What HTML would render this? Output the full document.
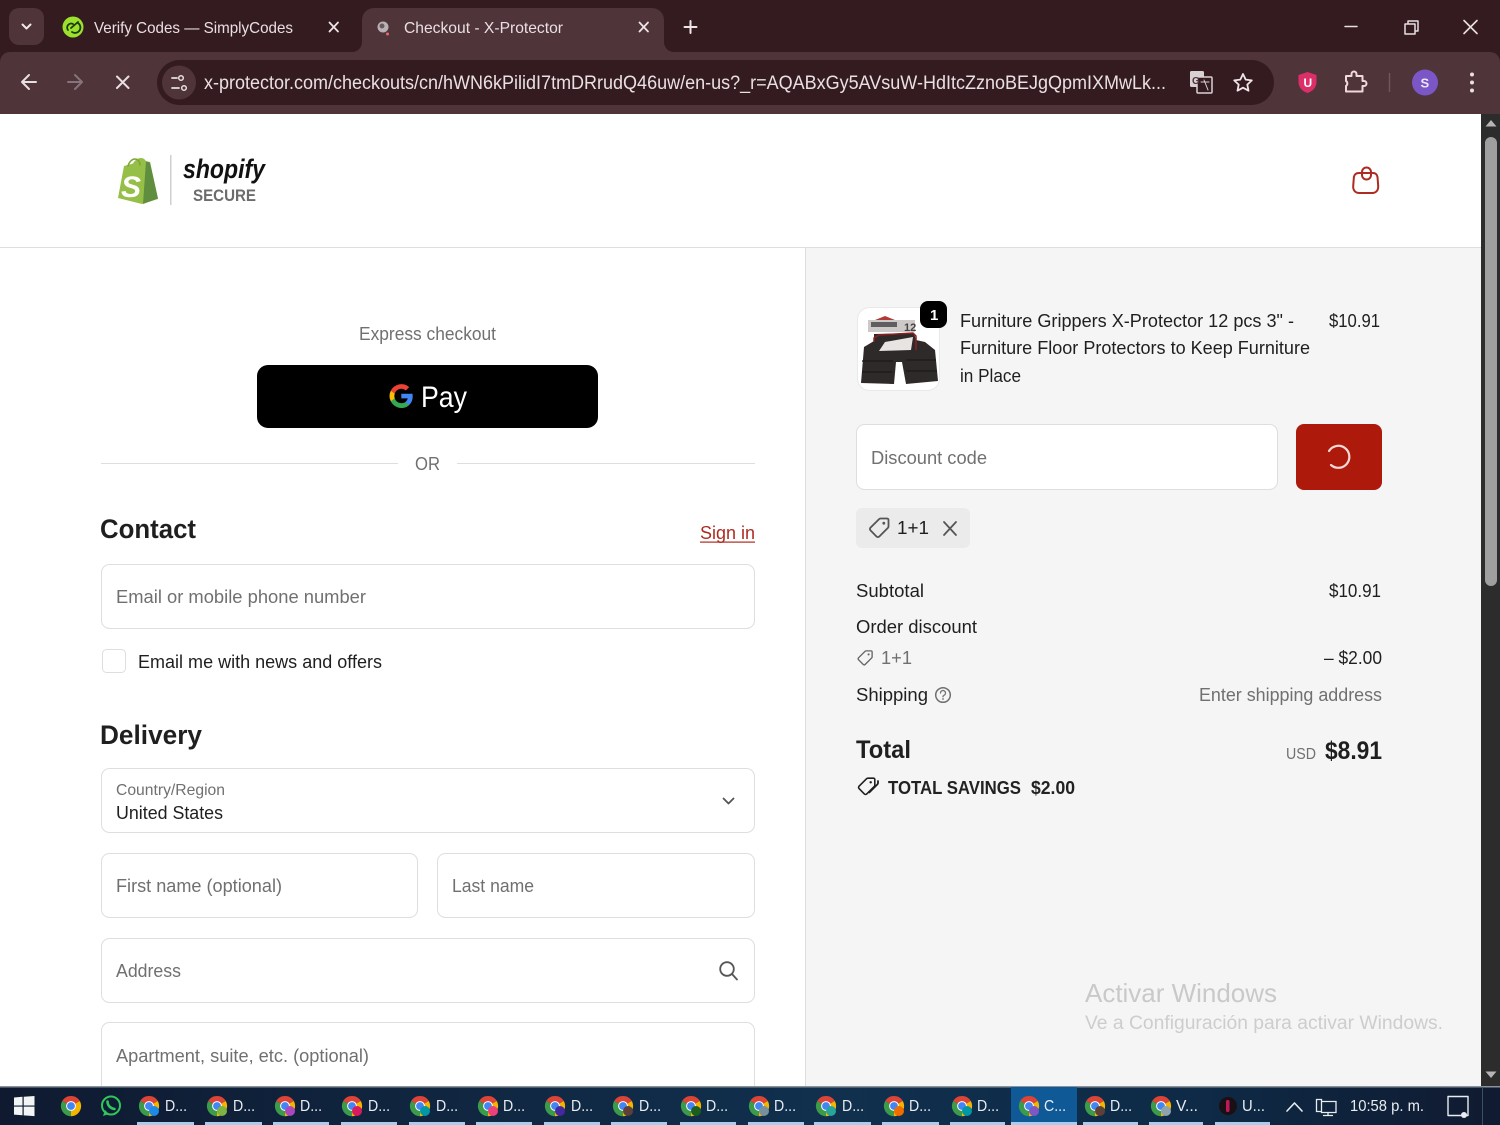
<!DOCTYPE html>
<html lang="en"><head><meta charset="utf-8"><title>Checkout - X-Protector</title>
<style>
html,body{margin:0;padding:0;width:1500px;height:1125px;overflow:hidden;background:#fff}
svg{display:block;font-size:18.5px;filter:blur(.3px)}
text{font-family:"Liberation Sans",sans-serif;fill:#1f1f1f}
.g{fill:#707070}
.c{fill:#e9e0e3}
.tb{fill:#e8edf2;font-size:16px}
.ln{fill:none;stroke-linecap:round;stroke-linejoin:round}
</style></head><body>
<svg width="1500" height="1125" viewBox="0 0 1500 1125" xmlns="http://www.w3.org/2000/svg">
<defs>
<linearGradient id="tbg" x1="0" x2="1" y1="0" y2="0"><stop offset="0" stop-color="#0f1a30"/><stop offset=".55" stop-color="#10304e"/><stop offset=".8" stop-color="#0e2a46"/><stop offset="1" stop-color="#101a30"/></linearGradient>
<symbol id="ch" viewBox="-11 -11 22 22" width="22" height="22" overflow="visible">
<path d="M0 0L-8.8-5A10.2 10.2 0 0 1 8.8-5Z" fill="#db4437"/>
<path d="M0 0L8.8-5A10.2 10.2 0 0 1 0 10.2Z" fill="#f4b400"/>
<path d="M0 0L0 10.2A10.2 10.2 0 0 1-8.8-5Z" fill="#3c9b4a"/>
<circle r="4.9" fill="#fff"/><circle r="3.9" fill="#4285f4"/>
</symbol>
<symbol id="tag" viewBox="0 0 24 24" width="24" height="24">
<path class="ln" d="M13.5 2.5H20a1.5 1.5 0 0 1 1.5 1.5v6.5a2 2 0 0 1-.6 1.4l-8.6 8.6a2 2 0 0 1-2.8 0L3.5 14.4a2 2 0 0 1 0-2.8l8.6-8.5a2 2 0 0 1 1.4-.6z" stroke="currentColor" stroke-width="1.8"/>
<circle cx="16.8" cy="7.2" r="1.4" fill="currentColor"/>
</symbol>
</defs>

<!-- browser chrome -->
<rect width="1500" height="114" fill="#341b20"/>
<rect x="9" y="8" width="35" height="37" rx="10" fill="#4f343a"/>
<path class="ln" d="M22.5 24.5l4 4 4-4" stroke="#f0e8ea" stroke-width="2"/>
<circle cx="73" cy="27" r="10.5" fill="#9be22d"/>
<path class="ln" d="M68 30a4 4 0 0 1 5-6M72 32a5 5 0 0 0 6-9M71 28l7-6" stroke="#1e3a10" stroke-width="1.8"/>
<text class="c" x="94" y="33" font-size="16" textLength="199" lengthAdjust="spacingAndGlyphs">Verify Codes — SimplyCodes</text>
<path class="ln" d="M329.5 22.5l8.5 9M338 22.5L329.5 31.5" stroke="#eee5e8" stroke-width="1.8"/>
<path d="M352 52a10 10 0 0 0 10-10V20a12 12 0 0 1 12-12h278a12 12 0 0 1 12 12v22a10 10 0 0 0 10 10z" fill="#4f343a"/>
<circle cx="383" cy="27" r="5.5" fill="#b9b2b5"/><circle cx="382" cy="26" r="2.5" fill="#6a5a60"/><circle cx="387.5" cy="34" r="1.5" fill="#e36a6a"/>
<text class="c" x="404" y="33" font-size="16" textLength="159" lengthAdjust="spacingAndGlyphs">Checkout - X-Protector</text>
<path class="ln" d="M639.5 22.5l8.5 9M648 22.5L639.5 31.5" stroke="#eee5e8" stroke-width="1.8"/>
<path class="ln" d="M690.5 21v12M684.5 27h12" stroke="#eee5e8" stroke-width="2"/>
<path class="ln" d="M1345 26.5h12" stroke="#e8dfe2" stroke-width="1.5"/>
<path class="ln" d="M1405 24h10v10h-10zM1408 24v-3h10v10h-3" stroke="#e8dfe2" stroke-width="1.5"/>
<path class="ln" d="M1464 20.5l13 13M1477 20.5l-13 13" stroke="#e8dfe2" stroke-width="1.6"/>

<path d="M0 114V62a10 10 0 0 1 10-10h1480a10 10 0 0 1 10 10v52z" fill="#4f343a"/>
<path class="ln" d="M36 82H23M29 75l-7 7 7 7" stroke="#e8dfe2" stroke-width="2"/>
<path class="ln" d="M68 82h13M75 75l7 7-7 7" stroke="#87737a" stroke-width="2"/>
<path class="ln" d="M117 76.5l11.5 11.5M128.5 76.5L117 88" stroke="#e8dfe2" stroke-width="2"/>
<rect x="157" y="60" width="1117" height="45" rx="22.5" fill="#341b20"/>
<circle cx="179" cy="82.5" r="17" fill="#4f343a"/>
<path class="ln" d="M172 78h5M172 88h7" stroke="#e8dfe2" stroke-width="1.8"/>
<circle cx="181" cy="78" r="2.3" fill="none" stroke="#e8dfe2" stroke-width="1.5"/><circle cx="184" cy="88" r="2.3" fill="none" stroke="#e8dfe2" stroke-width="1.5"/>
<text class="c" x="204" y="89" font-size="19" textLength="962" lengthAdjust="spacingAndGlyphs">x-protector.com/checkouts/cn/hWN6kPilidI7tmDRrudQ46uw/en-us?_r=AQABxGy5AVsuW-HdItcZznoBEJgQpmIXMwLk...</text>
<rect x="1190" y="71" width="14" height="16" rx="1.5" fill="#d9d2d4"/>
<rect x="1197" y="77" width="15" height="16" rx="1" fill="#341b20" stroke="#d9d2d4" stroke-width="1.5"/>
<text x="1192" y="84" font-size="10" font-weight="700" style="fill:#4f343a">G</text>
<path class="ln" d="M1201 82h8M1204 80l4 10" stroke="#d9d2d4" stroke-width="1"/>
<path class="ln" d="M1243 74l2.7 5.6 6.1.8-4.500 4.200 1.200 6.100-5.500-3-5.500 3 1.200-6.100-4.500-4.200 6.100-.8z" stroke="#efe6e9" stroke-width="1.8"/>
<path d="M1307.5 72l9 3v7c0 6-4.500 9.500-9 11-4.500-1.500-9-5-9-11v-7z" fill="#dc2e68"/>
<text x="1303.5" y="87" font-size="12" font-weight="700" style="fill:#fff">U</text>
<path class="ln" d="M1346 76h5.500v-2a2.500 2.500 0 0 1 5 0v2h6v5h1.500a2.500 2.500 0 0 1 0 5h-1.500v5.500h-16.500v-5.500a3 3 0 0 0 0-5z" stroke="#efd9dd" stroke-width="2"/>
<path d="M1389.5 73v19" stroke="#6f575d" stroke-width="1.5"/>
<circle cx="1425" cy="82.5" r="13" fill="#7b56c7"/>
<text x="1420.5" y="87.5" font-size="13" font-weight="700" style="fill:#ece6f6">S</text>
<circle cx="1472" cy="74.5" r="2" fill="#e8dfe2"/><circle cx="1472" cy="82.5" r="2" fill="#e8dfe2"/><circle cx="1472" cy="90.5" r="2" fill="#e8dfe2"/>

<!-- page -->
<rect y="114" width="1481" height="973" fill="#fff"/>
<rect x="806" y="248" width="675" height="839" fill="#f5f5f5"/>
<rect y="247" width="1481" height="1" fill="#dedede"/>
<rect x="805" y="248" width="1" height="839" fill="#dedede"/>

<!-- scrollbar -->
<rect x="1481" y="114" width="19" height="973" fill="#2c2c2c"/>
<rect x="1485" y="137" width="12" height="449" rx="6" fill="#9f9f9f"/>
<path d="M1491 120l5.5 6.5h-11z" fill="#b5b5b5"/>
<path d="M1491 1078l5.5-6.5h-11z" fill="#b5b5b5"/>

<!-- shopify logo -->
<path d="M118 198l6-32 9-2.500c2-3.500 5-5.500 8-5.500s4 2 5 3l4 1 8 37-16 5z" fill="#95bf47"/>
<path d="M146 161.500l4 1 8 36-15 5.500z" fill="#5e8e3e"/>
<path class="ln" d="M128 166c1-4 4-7 7-7s5 3 5 6" stroke="#7da638" stroke-width="1.5"/>
<text x="121" y="197" font-size="30" font-weight="700" font-style="italic" style="fill:#fff">S</text>
<rect x="170" y="155" width="1.5" height="50" fill="#cfcfcf"/>
<text x="183" y="178" font-size="27" font-weight="700" font-style="italic" textLength="82" lengthAdjust="spacingAndGlyphs" style="fill:#111">shopify</text>
<text x="193" y="201" font-size="16.5" font-weight="700" textLength="63" lengthAdjust="spacingAndGlyphs" style="fill:#6c6c6c">SECURE</text>

<!-- cart icon -->
<path class="ln" d="M1359 173h14c2.500 0 4 1.500 4.500 4l.7 9c.3 4-2 7-6 7h-13c-4 0-6.300-3-6-7l.7-9c.5-2.500 2-4 5.100-4z" stroke="#ad2b20" stroke-width="2"/>
<path class="ln" d="M1362 175v-3a4.500 4.500 0 0 1 9 0v3a4.500 4.500 0 0 1-9 0z" stroke="#ad2b20" stroke-width="2"/>

<!-- left column -->
<text class="g" x="359" y="340" textLength="137" lengthAdjust="spacingAndGlyphs">Express checkout</text>
<rect x="257" y="365" width="341" height="63" rx="11" fill="#000"/>
<path d="M412.7 396.200c0-.9-.1-1.700-.2-2.500h-11.200v4.700h6.400a5.500 5.500 0 0 1-2.400 3.600v3h3.800c2.300-2.100 3.600-5.100 3.600-8.800z" fill="#4285f4"/>
<path d="M401.3 408c3.200 0 5.900-1.100 7.800-2.900l-3.800-3c-1 .7-2.400 1.100-4 1.100-3.100 0-5.700-2.100-6.600-4.900h-3.900v3a11.800 11.800 0 0 0 10.500 6.700z" fill="#34a853"/>
<path d="M394.7 398.300a7 7 0 0 1 0-4.600v-3h-3.900a11.800 11.800 0 0 0 0 10.600z" fill="#fbbc04"/>
<path d="M401.3 388.700c1.700 0 3.300.6 4.500 1.800l3.400-3.400a11.800 11.800 0 0 0-18.400 3.600l3.900 3c.9-2.900 3.500-5 6.600-5z" fill="#ea4335"/>
<text x="421" y="407" font-size="30" textLength="46" lengthAdjust="spacingAndGlyphs" style="fill:#fff">Pay</text>
<rect x="101" y="463" width="297" height="1" fill="#dedede"/>
<rect x="457" y="463" width="298" height="1" fill="#dedede"/>
<text class="g" x="415" y="470" textLength="25" lengthAdjust="spacingAndGlyphs">OR</text>

<text x="100" y="538" font-size="27" font-weight="700" textLength="96" lengthAdjust="spacingAndGlyphs">Contact</text>
<text x="700" y="539" textLength="55" lengthAdjust="spacingAndGlyphs" style="fill:#ad2b20">Sign in</text>
<rect x="700" y="541.5" width="55" height="1.2" fill="#ad2b20"/>
<rect x="101.5" y="564.5" width="653" height="64" rx="8" fill="#fff" stroke="#dedede"/>
<text class="g" x="116" y="603" textLength="250" lengthAdjust="spacingAndGlyphs">Email or mobile phone number</text>
<rect x="102.5" y="649.5" width="23" height="23" rx="4" fill="#fff" stroke="#dedede"/>
<text x="138" y="668" textLength="244" lengthAdjust="spacingAndGlyphs">Email me with news and offers</text>

<text x="100" y="744" font-size="27" font-weight="700" textLength="102" lengthAdjust="spacingAndGlyphs">Delivery</text>
<rect x="101.5" y="768.5" width="653" height="64" rx="8" fill="#fff" stroke="#dedede"/>
<text class="g" x="116" y="795" font-size="16" textLength="109" lengthAdjust="spacingAndGlyphs">Country/Region</text>
<text x="116" y="819" textLength="107" lengthAdjust="spacingAndGlyphs">United States</text>
<path class="ln" d="M723.5 798.5l5 5 5-5" stroke="#555" stroke-width="1.8"/>
<rect x="101.5" y="853.5" width="316" height="64" rx="8" fill="#fff" stroke="#dedede"/>
<text class="g" x="116" y="892" textLength="166" lengthAdjust="spacingAndGlyphs">First name (optional)</text>
<rect x="437.5" y="853.5" width="317" height="64" rx="8" fill="#fff" stroke="#dedede"/>
<text class="g" x="452" y="892" textLength="82" lengthAdjust="spacingAndGlyphs">Last name</text>
<rect x="101.5" y="938.5" width="653" height="64" rx="8" fill="#fff" stroke="#dedede"/>
<text class="g" x="116" y="977" textLength="65" lengthAdjust="spacingAndGlyphs">Address</text>
<circle cx="727" cy="969" r="6.8" fill="none" stroke="#555" stroke-width="1.8"/>
<path class="ln" d="M732 974l5 5.5" stroke="#555" stroke-width="1.8"/>
<rect x="101.5" y="1022.5" width="653" height="80" rx="8" fill="#fff" stroke="#dedede"/>
<text class="g" x="116" y="1062" textLength="253" lengthAdjust="spacingAndGlyphs">Apartment, suite, etc. (optional)</text>

<!-- right column -->
<rect x="857.5" y="307.5" width="82" height="83" rx="12" fill="#fff" stroke="#e9e9e9"/>
<rect x="868" y="320" width="47" height="12" fill="#cdc9c9"/>
<path d="M875 320l10-4 10 4z" fill="#b23a36"/>
<rect x="871" y="322" width="26" height="5" fill="#5f5f5f"/>
<text x="904" y="331" font-size="11" font-weight="700" style="fill:#444">12</text>
<path d="M861 383L864 347L874 341L874 334L914 333L916 340L925 342L935 350L938 381L906 384L902 362L896 362L894 384Z" fill="#2f2a2a"/>
<path d="M874 342v-4l5-3 34-2 3 3v14" fill="none" stroke="#8f2020" stroke-width="1.5"/>
<path d="M879 351l6-9 28-5-2 13z" fill="#e8e4e2"/>
<path d="M862 361h31M862 372h30M906 360h30M906 371h31" stroke="#1b1919" stroke-width="1.2"/>
<rect x="920" y="301" width="27" height="27" rx="8" fill="#000"/>
<text x="930" y="320" font-size="15" font-weight="700" style="fill:#fff">1</text>

<text x="960" y="327" textLength="334" lengthAdjust="spacingAndGlyphs">Furniture Grippers X-Protector 12 pcs 3" -</text>
<text x="960" y="354" textLength="350" lengthAdjust="spacingAndGlyphs">Furniture Floor Protectors to Keep Furniture</text>
<text x="960" y="382" textLength="61" lengthAdjust="spacingAndGlyphs">in Place</text>
<text x="1329" y="327" textLength="51" lengthAdjust="spacingAndGlyphs">$10.91</text>

<rect x="856.5" y="424.5" width="421" height="65" rx="8" fill="#fff" stroke="#dedede"/>
<text class="g" x="871" y="464" textLength="116" lengthAdjust="spacingAndGlyphs">Discount code</text>
<rect x="1296" y="424" width="86" height="66" rx="8" fill="#ad1a0c"/>
<path class="ln" d="M1329 451a11 11 0 1 1 2 14" stroke="#f6d9d5" stroke-width="2.2"/>

<rect x="856" y="508" width="114" height="40" rx="6" fill="#ebebeb"/>
<use href="#tag" x="867" y="516" width="24" height="24" style="color:#555"/>
<text x="897" y="534" textLength="32" lengthAdjust="spacingAndGlyphs">1+1</text>
<path class="ln" d="M944 522l12 13M956 522l-12 13" stroke="#555" stroke-width="1.8"/>

<text x="856" y="597" textLength="68" lengthAdjust="spacingAndGlyphs">Subtotal</text>
<text x="1329" y="597" textLength="52" lengthAdjust="spacingAndGlyphs">$10.91</text>
<text x="856" y="633" textLength="121" lengthAdjust="spacingAndGlyphs">Order discount</text>
<use href="#tag" x="856" y="649" width="18" height="18" style="color:#666"/>
<text class="g" x="881" y="664" textLength="31" lengthAdjust="spacingAndGlyphs">1+1</text>
<text x="1324" y="664" textLength="58" lengthAdjust="spacingAndGlyphs">– $2.00</text>
<text x="856" y="701" textLength="72" lengthAdjust="spacingAndGlyphs">Shipping</text>
<circle cx="943" cy="695" r="7.3" fill="none" stroke="#707070" stroke-width="1.5"/>
<path class="ln" d="M940.5 693a2.500 2.500 0 1 1 3.500 2.300c-.7.4-1 .8-1 1.500" stroke="#707070" stroke-width="1.3"/>
<circle cx="943" cy="699" r=".9" fill="#707070"/>
<text class="g" x="1199" y="701" textLength="183" lengthAdjust="spacingAndGlyphs">Enter shipping address</text>

<text x="856" y="758" font-size="25" font-weight="700" textLength="55" lengthAdjust="spacingAndGlyphs">Total</text>
<text class="g" x="1286" y="759" font-size="16" textLength="30" lengthAdjust="spacingAndGlyphs">USD</text>
<text x="1325" y="759" font-size="25" font-weight="700" textLength="57" lengthAdjust="spacingAndGlyphs">$8.91</text>
<use href="#tag" x="856" y="776" width="21" height="21" style="color:#1f1f1f"/>
<path class="ln" d="M878 781v2a2 2 0 0 1-.6 1.400l-8 8" stroke="#1f1f1f" stroke-width="1.8"/>
<text x="888" y="794" font-weight="700" textLength="133" lengthAdjust="spacingAndGlyphs" style="fill:#222">TOTAL SAVINGS</text>
<text x="1031" y="794" font-weight="700" textLength="44" lengthAdjust="spacingAndGlyphs" style="fill:#222">$2.00</text>

<text x="1085" y="1002" font-size="26" textLength="192" lengthAdjust="spacingAndGlyphs" style="fill:#c9c9c9">Activar Windows</text>
<text x="1085" y="1029" font-size="19" textLength="358" lengthAdjust="spacingAndGlyphs" style="fill:#cdcdcd">Ve a Configuración para activar Windows.</text>

<!-- taskbar -->
<rect y="1086" width="1500" height="39" fill="url(#tbg)"/>
<rect y="1086" width="1500" height="1.5" fill="#8a929c"/>
<path d="M14 1097.500l8.500-.7v8.700H14zM23.700 1096.700l10.800-.7v9.500H23.700zM14 1106.600h8.500v8.700l-8.500-.7zM23.700 1106.600h10.800v9.500l-10.800-.7z" fill="#f2f4f6"/>
<use href="#ch" x="60" y="1095"/>
<circle cx="111" cy="1105.5" r="9" fill="none" stroke="#31c55a" stroke-width="2"/>
<path d="M103 1116l2-6 4 4z" fill="#31c55a"/>
<path class="ln" d="M107.5 1101.500c0 4 3 7 7 7.500" stroke="#31c55a" stroke-width="2.6"/>

<rect x="1011" y="1087" width="66" height="38" fill="#0f5a96"/>

<!-- task items -->
<g fill="#a9cdea">
<rect x="137" y="1122" width="57" height="3"/><rect x="205" y="1122" width="57" height="3"/><rect x="273" y="1122" width="56" height="3"/><rect x="341" y="1122" width="56" height="3"/><rect x="409" y="1122" width="56" height="3"/><rect x="476" y="1122" width="56" height="3"/><rect x="544" y="1122" width="56" height="3"/><rect x="611" y="1122" width="56" height="3"/><rect x="680" y="1122" width="56" height="3"/><rect x="748" y="1122" width="56" height="3"/><rect x="814" y="1122" width="57" height="3"/><rect x="882" y="1122" width="57" height="3"/><rect x="950" y="1122" width="55" height="3"/><rect x="1011" y="1122" width="66" height="3"/><rect x="1083" y="1122" width="55" height="3"/><rect x="1149" y="1122" width="54" height="3"/><rect x="1215" y="1122" width="55" height="3"/>
</g>
<use href="#ch" x="138" y="1095"/><circle cx="154" cy="1111" r="5" fill="#1e88e5"/><text class="tb" x="165" y="1111" textLength="22" lengthAdjust="spacingAndGlyphs">D...</text>
<use href="#ch" x="206" y="1095"/><circle cx="222" cy="1111" r="5" fill="#7cb342"/><text class="tb" x="233" y="1111" textLength="22" lengthAdjust="spacingAndGlyphs">D...</text>
<use href="#ch" x="274" y="1095"/><circle cx="290" cy="1111" r="5" fill="#ab47bc"/><text class="tb" x="300" y="1111" textLength="22" lengthAdjust="spacingAndGlyphs">D...</text>
<use href="#ch" x="341" y="1095"/><circle cx="357" cy="1111" r="5" fill="#d81b60"/><text class="tb" x="368" y="1111" textLength="22" lengthAdjust="spacingAndGlyphs">D...</text>
<use href="#ch" x="409" y="1095"/><circle cx="425" cy="1111" r="5" fill="#0097a7"/><text class="tb" x="436" y="1111" textLength="22" lengthAdjust="spacingAndGlyphs">D...</text>
<use href="#ch" x="477" y="1095"/><circle cx="493" cy="1111" r="5" fill="#ec407a"/><text class="tb" x="503" y="1111" textLength="22" lengthAdjust="spacingAndGlyphs">D...</text>
<use href="#ch" x="544" y="1095"/><circle cx="560" cy="1111" r="5" fill="#4527a0"/><text class="tb" x="571" y="1111" textLength="22" lengthAdjust="spacingAndGlyphs">D...</text>
<use href="#ch" x="612" y="1095"/><circle cx="628" cy="1111" r="5" fill="#5d4037"/><text class="tb" x="639" y="1111" textLength="22" lengthAdjust="spacingAndGlyphs">D...</text>
<use href="#ch" x="680" y="1095"/><circle cx="696" cy="1111" r="5" fill="#1b5e20"/><text class="tb" x="706" y="1111" textLength="22" lengthAdjust="spacingAndGlyphs">D...</text>
<use href="#ch" x="748" y="1095"/><circle cx="764" cy="1111" r="5" fill="#78909c"/><text class="tb" x="774" y="1111" textLength="22" lengthAdjust="spacingAndGlyphs">D...</text>
<use href="#ch" x="815" y="1095"/><circle cx="831" cy="1111" r="5" fill="#26a69a"/><text class="tb" x="842" y="1111" textLength="22" lengthAdjust="spacingAndGlyphs">D...</text>
<use href="#ch" x="883" y="1095"/><circle cx="899" cy="1111" r="5" fill="#ef6c00"/><text class="tb" x="909" y="1111" textLength="22" lengthAdjust="spacingAndGlyphs">D...</text>
<use href="#ch" x="951" y="1095"/><circle cx="967" cy="1111" r="5" fill="#0097a7"/><text class="tb" x="977" y="1111" textLength="22" lengthAdjust="spacingAndGlyphs">D...</text>
<use href="#ch" x="1018" y="1095"/><circle cx="1034" cy="1111" r="5" fill="#7e57c2"/><text class="tb" x="1044" y="1111" textLength="22" lengthAdjust="spacingAndGlyphs">C...</text>
<use href="#ch" x="1084" y="1095"/><circle cx="1100" cy="1111" r="5" fill="#5d4037"/><text class="tb" x="1110" y="1111" textLength="22" lengthAdjust="spacingAndGlyphs">D...</text>
<use href="#ch" x="1150" y="1095"/><circle cx="1166" cy="1111" r="5" fill="#90a4ae"/><text class="tb" x="1176" y="1111" textLength="22" lengthAdjust="spacingAndGlyphs">V...</text>
<circle cx="1228" cy="1106" r="9" fill="#1a1014"/><rect x="1226" y="1100" width="3.5" height="12" rx="1.5" fill="#c2185b"/>
<text class="tb" x="1242" y="1111" textLength="23" lengthAdjust="spacingAndGlyphs">U...</text>

<path class="ln" d="M1287 1111l7.5-8 7.5 8" stroke="#e8edf2" stroke-width="1.6"/>
<path d="M1316.5 1099.500h5v12h-5zM1321.5 1101.500h14.500v11h-14.500zM1328 1112.500v3M1323 1115.500h10" fill="none" stroke="#e8edf2" stroke-width="1.3"/>
<text class="tb" x="1350" y="1111" textLength="74" lengthAdjust="spacingAndGlyphs">10:58 p. m.</text>
<path class="ln" d="M1448 1096.500h20v19h-9l-2.500 0h-8.500z" stroke="#e8edf2" stroke-width="1.4"/>
<circle cx="1464" cy="1115" r="3" fill="#e8edf2"/>
<rect x="1482" y="1087" width="1" height="38" fill="#3a5068"/>
</svg>
</body></html>
